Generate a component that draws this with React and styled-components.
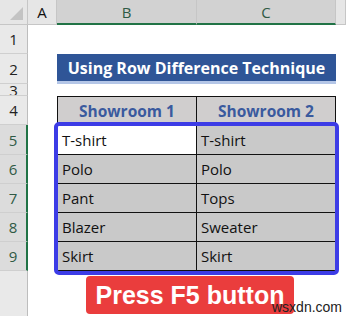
import React from 'react';
import styled, { createGlobalStyle } from 'styled-components';

const Global = createGlobalStyle`
  html, body { margin: 0; padding: 0; background: #fff; }
  body { width: 346px; height: 316px; overflow: hidden; }
`;

const Page = styled.div`
  position: relative;
  width: 346px;
  height: 316px;
  overflow: hidden;
  background: #fff;
  font-family: "Open Sans", "Noto Sans", sans-serif;
`;

const Sheet = styled.div`
  display: grid;
  grid-template-columns: 28px 29px 140px 139px 10px;
  grid-template-rows: 25px 29px 30px 12px 29px 30px 29px 29px 29px 29px 46px;
`;

const Corner = styled.div`
  background: #e6e6e6;
  border-right: 1px solid #c6c6c6;
  border-bottom: 1px solid #c6c6c6;
  position: relative;
  &::after {
    content: '';
    position: absolute;
    right: 4px;
    bottom: 4px;
    border-left: 13px solid transparent;
    border-bottom: 13px solid #c3c3c3;
  }
`;

const ColHead = styled.div`
  display: flex;
  align-items: center;
  justify-content: center;
  font-family: "Open Sans", sans-serif;
  font-size: 15px;
  background: ${p => (p.$sel ? '#d2d2d2' : '#e6e6e6')};
  color: ${p => (p.$sel ? '#2f5a45' : '#111')};
  border-right: 1px solid #c6c6c6;
  border-bottom: ${p => (p.$sel ? '2px solid #217346' : '1px solid #c6c6c6')};
  box-sizing: border-box;
`;

const RowHead = styled.div`
  display: flex;
  align-items: center;
  justify-content: center;
  overflow: hidden;
  font-size: 15px;
  box-sizing: border-box;
  background: ${p => (p.$sel ? '#dcdcdc' : '#e9e9e9')};
  color: ${p => (p.$sel ? '#2f5a45' : '#222')};
  border-bottom: 1px solid #cfcfcf;
  border-right: ${p => (p.$sel ? '2px solid #217346' : '1px solid #bdbdbd')};
`;

const Blank = styled.div`
  background: #fff;
`;

const Title = styled.div`
  grid-column: 3 / span 2;
  display: flex;
  align-items: center;
  justify-content: center;
  background: #2f5597;
  border-bottom: 3px solid #b4c6e7;
  color: #fff;
  font-weight: 700;
  font-size: 16px;
  padding-top: 1px;
`;

const HeadCell = styled.div`
  display: flex;
  align-items: center;
  justify-content: center;
  background: #d0cece;
  color: #3a5a9e;
  font-weight: 700;
  font-size: 15.5px;
  border: 1px solid #111;
  border-left-width: ${p => (p.$first ? '1px' : '0')};
  box-sizing: border-box;
`;

const Cell = styled.div`
  display: flex;
  align-items: center;
  padding-left: 4px;
  font-size: 15px;
  color: #111;
  background: ${p => (p.$white ? '#fff' : '#c9c9c9')};
  border-right: 1px solid #111;
  border-bottom: 1px solid #111;
  border-left: ${p => (p.$first ? '1px solid #111' : 'none')};
  box-sizing: border-box;
`;

const Frame = styled.div`
  position: absolute;
  left: 54px;
  top: 122px;
  width: 285px;
  height: 153px;
  border: 4px solid #3c3ce6;
  border-radius: 5px;
  box-sizing: border-box;
  pointer-events: none;
`;

const Button = styled.div`
  position: absolute;
  left: 86px;
  top: 276px;
  width: 208px;
  height: 38px;
  border-radius: 4px;
  background: #ea3d3d;
  color: #fff;
  font-family: "Liberation Sans", Arial, sans-serif;
  font-weight: 700;
  font-size: 25px;
  display: flex;
  align-items: center;
  justify-content: center;
`;

const Mark = styled.div`
  position: absolute;
  left: 272px;
  top: 299px;
  font-family: "Liberation Sans", Arial, sans-serif;
  font-size: 14px;
  color: #222;
`;

const rows = [
  ['T-shirt', 'T-shirt'],
  ['Polo', 'Polo'],
  ['Pant', 'Tops'],
  ['Blazer', 'Sweater'],
  ['Skirt', 'Skirt'],
];

export default function App() {
  return (
    <Page>
      <Global />
      <Sheet>
        <Corner />
        <ColHead>A</ColHead>
        <ColHead $sel>B</ColHead>
        <ColHead $sel>C</ColHead>
        <ColHead />

        <RowHead>1</RowHead>
        <Blank /><Blank /><Blank /><Blank />

        <RowHead>2</RowHead>
        <Blank />
        <Title>Using Row Difference Technique</Title>
        <Blank />

        <RowHead style={{ alignItems: 'flex-end', lineHeight: '10px' }}>3</RowHead>
        <Blank /><Blank /><Blank /><Blank />

        <RowHead>4</RowHead>
        <Blank />
        <HeadCell $first>Showroom 1</HeadCell>
        <HeadCell>Showroom 2</HeadCell>
        <Blank />

        {rows.map((r, i) => (
          <React.Fragment key={i}>
            <RowHead $sel>{i + 5}</RowHead>
            <Blank />
            <Cell $first $white={i === 0}>{r[0]}</Cell>
            <Cell>{r[1]}</Cell>
            <Blank />
          </React.Fragment>
        ))}

        <RowHead />
        <Blank /><Blank /><Blank /><Blank />
      </Sheet>
      <Frame />
      <Button>Press F5 button</Button>
      <Mark>wsxdn.com</Mark>
    </Page>
  );
}
